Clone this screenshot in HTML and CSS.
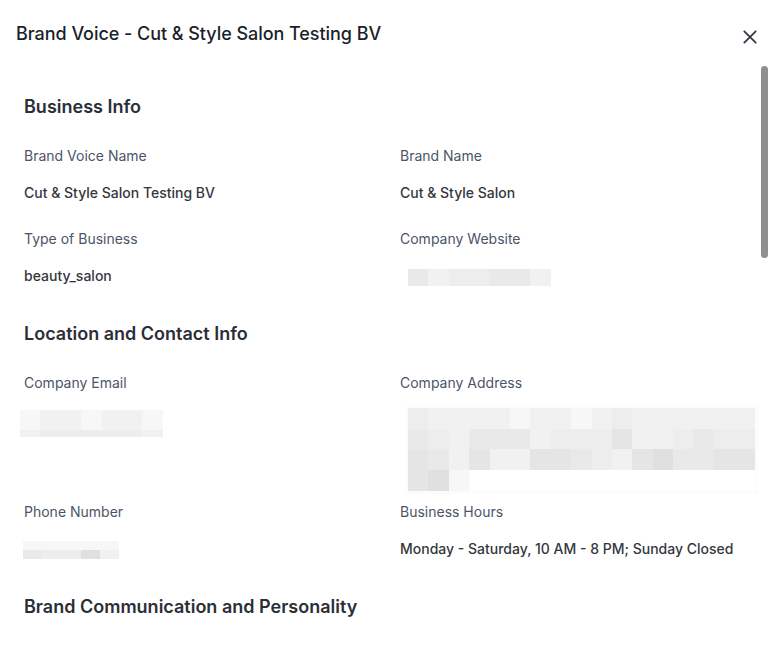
FILE: index.html
```html
<!DOCTYPE html>
<html lang="en">
<head>
<meta charset="utf-8">
<title>Brand Voice</title>
<link rel="stylesheet" href="styles.css">
</head>
<body>
<div class="modal">
  <header class="modal-header">
    <h1 class="modal-title">Brand Voice - Cut &amp; Style Salon Testing BV</h1>
    <button class="close-btn" aria-label="Close">
      <svg width="24" height="24" viewBox="0 0 24 24" fill="none" stroke="#333a44" stroke-width="1.8" stroke-linecap="round"><path d="M6.3 6.3L17.7 17.7M17.7 6.3L6.3 17.7"/></svg>
    </button>
  </header>
  <div class="modal-body">
    <div class="scroll-thumb"></div>

    <section class="section">
      <h2 class="section-title">Business Info</h2>
      <div class="fields">
        <div class="field">
          <div class="label">Brand Voice Name</div>
          <div class="value">Cut &amp; Style Salon Testing BV</div>
        </div>
        <div class="field">
          <div class="label">Brand Name</div>
          <div class="value">Cut &amp; Style Salon</div>
        </div>
        <div class="field">
          <div class="label">Type of Business</div>
          <div class="value">beauty_salon</div>
        </div>
        <div class="field">
          <div class="label">Company Website</div>
          <div class="value">
            <div class="blur blur-website">
              <div class="brow h17"><i class="t3"></i><i class="t1"></i><i class="t2"></i><i class="t2"></i><i class="t3"></i><i class="t3"></i><i class="t1"></i></div>
            </div>
          </div>
        </div>
      </div>
    </section>

    <section class="section">
      <h2 class="section-title">Location and Contact Info</h2>
      <div class="fields">
        <div class="field">
          <div class="label">Company Email</div>
          <div class="value">
            <div class="blur blur-email">
              <div class="brow h20"><i class="t0"></i><i class="t1"></i><i class="t1"></i><i class="t0"></i><i class="t1"></i><i class="t1"></i><i class="t0"></i></div>
              <div class="brow h7"><i class="t1"></i><i class="t2"></i><i class="t2"></i><i class="t2"></i><i class="t2"></i><i class="t2"></i><i class="t1"></i></div>
            </div>
          </div>
        </div>
        <div class="field">
          <div class="label">Company Address</div>
          <div class="value">
            <div class="blur blur-address">
              <div class="brow h21"><i class="t2"></i><i class="t1"></i><i class="t1"></i><i class="t1"></i><i class="t1"></i><i class="t0"></i><i class="t1"></i><i class="t1"></i><i class="t0"></i><i class="t1"></i><i class="t2"></i><i class="t1"></i><i class="t1"></i><i class="t1"></i><i class="t1"></i><i class="t1"></i><i class="t1"></i></div>
              <div class="brow h20"><i class="t3"></i><i class="t2"></i><i class="t1"></i><i class="t3"></i><i class="t3"></i><i class="t3"></i><i class="t1"></i><i class="t2"></i><i class="t2"></i><i class="t2"></i><i class="t4"></i><i class="t1"></i><i class="t1"></i><i class="t2"></i><i class="t3"></i><i class="t2"></i><i class="t2"></i></div>
              <div class="brow h21"><i class="t4"></i><i class="t3"></i><i class="t1"></i><i class="t4"></i><i class="t1"></i><i class="t1"></i><i class="t4"></i><i class="t4"></i><i class="t3"></i><i class="t2"></i><i class="t1"></i><i class="t4"></i><i class="t5"></i><i class="t3"></i><i class="t3"></i><i class="t4"></i><i class="t4"></i></div>
              <div class="brow h21"><i class="t4"></i><i class="t5"></i><i class="t0"></i></div>
            </div>
          </div>
        </div>
        <div class="field">
          <div class="label">Phone Number</div>
          <div class="value">
            <div class="blur blur-phone">
              <div class="brow h9"><i class="t0"></i><i class="t0"></i><i class="t0"></i><i class="t0"></i><i class="t0"></i></div>
              <div class="brow h9"><i class="t3"></i><i class="t2"></i><i class="t2"></i><i class="t5"></i><i class="t1"></i></div>
            </div>
          </div>
        </div>
        <div class="field">
          <div class="label">Business Hours</div>
          <div class="value">Monday - Saturday, 10 AM - 8 PM; Sunday Closed</div>
        </div>
      </div>
    </section>

    <section class="section">
      <h2 class="section-title">Brand Communication and Personality</h2>
    </section>
  </div>
</div>
</body>
</html>
```

FILE: styles.css
```css
* { box-sizing: border-box; }

html, body {
  margin: 0;
  padding: 0;
  background: #ffffff;
  overflow: hidden;
}

body {
  font-family: Inter, "Noto Sans", "Liberation Sans", sans-serif;
  color: #1f2530;
}

.modal {
  width: 782px;
  height: 647px;
  background: #ffffff;
  overflow: hidden;
}

.modal-header {
  display: flex;
  justify-content: space-between;
  align-items: flex-start;
  padding: 20px 20px 17px 16px;
}

.modal-title {
  margin: 0;
  font-size: 18px;
  line-height: 28px;
  font-weight: 500;
  color: #1a1f2c;
  letter-spacing: -0.05px;
}

.close-btn {
  margin-top: 5px;
  width: 24px;
  height: 24px;
  padding: 0;
  border: 0;
  background: transparent;
  display: flex;
  align-items: center;
  justify-content: center;
}

.modal-body {
  position: relative;
  padding: 27px 30px 0 24px;
}

.scroll-thumb {
  position: absolute;
  top: 0;
  right: 14px;
  width: 7px;
  height: 192px;
  border-radius: 4px;
  background: #8f8f8f;
}

.section + .section {
  margin-top: 34px;
}

.section-title {
  margin: 0;
  font-size: 18px;
  line-height: 28px;
  font-weight: 600;
  color: #2a2f37;
}

.fields {
  margin-top: 25px;
  display: grid;
  grid-template-columns: minmax(0, 1fr) minmax(0, 1fr);
  column-gap: 24px;
  row-gap: 26px;
}

.field {
  display: flex;
  flex-direction: column;
  gap: 17px;
  min-width: 0;
}

.label {
  font-size: 14px;
  line-height: 20px;
  font-weight: 400;
  color: #4b5567;
}

.value {
  font-size: 14px;
  line-height: 20px;
  font-weight: 500;
  color: #34373d;
  min-height: 20px;
}

.blur {
  display: flex;
  flex-direction: column;
}

.brow {
  display: flex;
}

.brow i {
  display: block;
  width: 20.4px;
  flex: none;
}

.h7 { height: 7px; }
.h9 { height: 9px; }
.h17 { height: 17px; }
.h20 { height: 20px; }
.h21 { height: 21px; }

.t0 { background: #f7f7f7; }
.t1 { background: #f1f1f1; }
.t2 { background: #ededed; }
.t3 { background: #e9e9e9; }
.t4 { background: #e5e5e5; }
.t5 { background: #e0e0e0; }

.blur-website {
  margin: 3px 0 0 8px;
}

.blur-email {
  margin-left: -4px;
}

.blur-address {
  margin: -2px 0 -15px 8px;
  box-shadow: 0 0 0 3px #fcfcfc;
  width: max-content;
}

.blur-phone {
  margin: 2px 0 0 -1px;
}

.blur-phone .brow i {
  width: 19.2px;
}
```
